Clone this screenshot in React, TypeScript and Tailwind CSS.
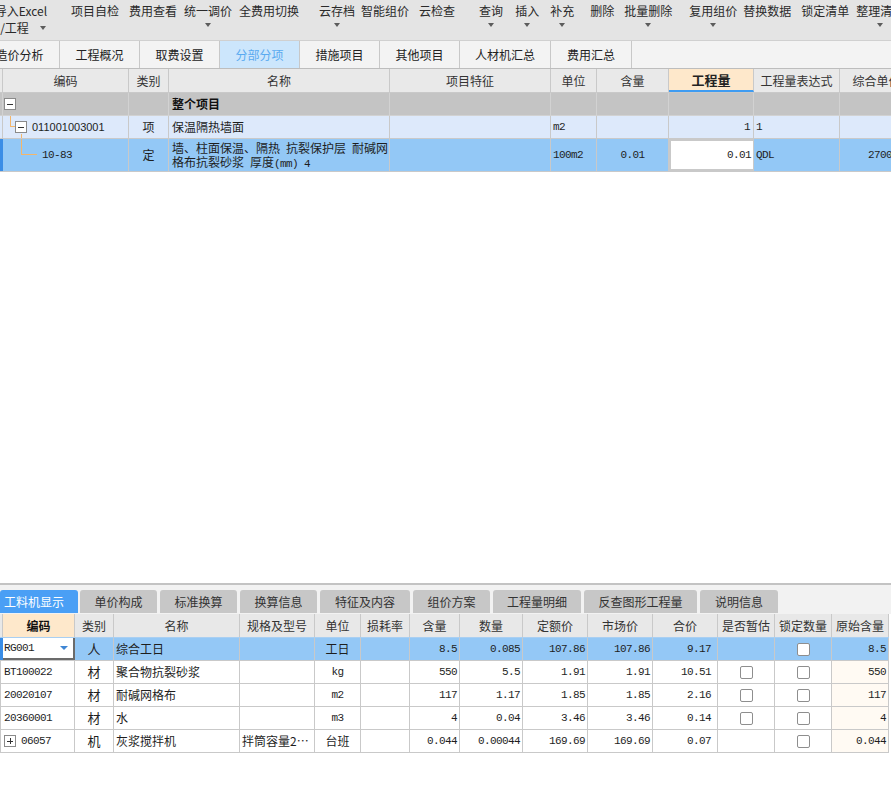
import React from 'react';

const mono = "font-['Liberation_Mono','Noto_Sans_CJK_SC',monospace] text-[11px] tracking-[-0.6px]";
const cell = 'border-r border-[#c9c9c9] flex items-center overflow-hidden whitespace-nowrap';

const Caret = ({ className = '' }: { className?: string }) => (
  <span className={`block w-0 h-0 border-x-[3.5px] border-x-transparent border-t-[4px] border-t-[#5c5c5c] ${className}`} />
);

const Gap = () => <span className="inline-block w-[6px]" />;

const tools = [
  { t: '项目自检', c: 'ml-[24px]' },
  { t: '费用查看', c: 'ml-[10px]' },
  { t: '统一调价', c: 'ml-[7px]', a: true },
  { t: '全费用切换', c: 'ml-[7px]' },
  { t: '云存档', c: 'ml-[20px]', a: true },
  { t: '智能组价', c: 'ml-[6px]' },
  { t: '云检查', c: 'ml-[10px]' },
  { t: '查询', c: 'ml-[24px]', a: true },
  { t: '插入', c: 'ml-[12px]', a: true },
  { t: '补充', c: 'ml-[11px]', a: true },
  { t: '删除', c: 'ml-[16px]' },
  { t: '批量删除', c: 'ml-[10px]', a: true },
  { t: '复用组价', c: 'ml-[17px]', a: true },
  { t: '替换数据', c: 'ml-[6px]' },
  { t: '锁定清单', c: 'ml-[10px]' },
  { t: '整理清单', c: 'ml-[7px]', a: true },
];

const topTabs = [
  { t: '造价分析', c: 'ml-[-20px] w-[80px]' },
  { t: '工程概况', c: 'w-[80px]' },
  { t: '取费设置', c: 'w-[80px]' },
  { t: '分部分项', c: 'w-[80px]', active: true },
  { t: '措施项目', c: 'w-[80px]' },
  { t: '其他项目', c: 'w-[80px]' },
  { t: '人材机汇总', c: 'w-[91px]' },
  { t: '费用汇总', c: 'w-[81px]' },
];

const bottomTabs = [
  { t: '工料机显示', c: 'w-[78px] justify-start pl-[4px] bg-[#4a9ff5] text-white', first: true },
  { t: '单价构成', c: 'w-[77px] ml-[-1px]' },
  { t: '标准换算', c: 'w-[77px]' },
  { t: '换算信息', c: 'w-[77px]' },
  { t: '特征及内容', c: 'w-[90px]' },
  { t: '组价方案', c: 'w-[77px]' },
  { t: '工程量明细', c: 'w-[88px]' },
  { t: '反查图形工程量', c: 'w-[113px]' },
  { t: '说明信息', c: 'w-[78px]' },
];

const TOP = 'grid grid-cols-[3px_126px_40px_221px_161px_46px_72px_85px_86px_74px] w-[914px]';
const LOW = 'grid grid-cols-[3px_72px_39px_126px_75px_46px_49px_50px_63px_65px_65px_65px_57px_57px_57px] w-[889px]';

const topHead = ['编码', '类别', '名称', '项目特征', '单位', '含量', '工程量', '工程量表达式', '综合单价'];
const lowHead = ['编码', '类别', '名称', '规格及型号', '单位', '损耗率', '含量', '数量', '定额价', '市场价', '合价', '是否暂估', '锁定数量', '原始含量'];

type Item = {
  code: string; cat: string; name: string; spec?: string; unit: string; cjkUnit?: boolean;
  qty: string; num: string; quota: string; market: string; total: string; est: boolean; orig: string; plus?: boolean;
};

const items: Item[] = [
  { code: 'RG001', cat: '人', name: '综合工日', unit: '工日', cjkUnit: true, qty: '8.5', num: '0.085', quota: '107.86', market: '107.86', total: '9.17', est: false, orig: '8.5' },
  { code: 'BT100022', cat: '材', name: '聚合物抗裂砂浆', unit: 'kg', qty: '550', num: '5.5', quota: '1.91', market: '1.91', total: '10.51', est: true, orig: '550' },
  { code: '20020107', cat: '材', name: '耐碱网格布', unit: 'm2', qty: '117', num: '1.17', quota: '1.85', market: '1.85', total: '2.16', est: true, orig: '117' },
  { code: '20360001', cat: '材', name: '水', unit: 'm3', qty: '4', num: '0.04', quota: '3.46', market: '3.46', total: '0.14', est: true, orig: '4' },
  { code: '06057', cat: '机', name: '灰浆搅拌机', spec: '拌筒容量2…', unit: '台班', cjkUnit: true, qty: '0.044', num: '0.00044', quota: '169.69', market: '169.69', total: '0.07', est: false, orig: '0.044', plus: true },
];

const TreeBox = ({ sign }: { sign: '-' | '+' }) => (
  <span className="relative block w-[12px] h-[12px] shrink-0 border border-[#8a8a8a] bg-white">
    <span className="absolute left-[2px] top-[4.5px] w-[6px] h-[1px] bg-[#333]" />
    {sign === '+' && <span className="absolute left-[4.5px] top-[2px] w-[1px] h-[6px] bg-[#333]" />}
  </span>
);

const Check = () => <span className="block w-[13px] h-[13px] border border-[#8e8e8e] rounded-[2px] bg-white" />;

export default function App() {
  return (
    <div className="w-[891px] h-[791px] overflow-hidden flex flex-col bg-white text-[12px] text-[#1e1e1e] font-['Noto_Sans_CJK_SC',sans-serif] leading-[14px]">
      {/* toolbar */}
      <div className="h-[41px] shrink-0 flex bg-[#e4e4e4] border-b border-[#d0d0d0] text-[#2a2a2a] overflow-hidden">
        <div className="ml-[-5px] w-[52px] shrink-0 flex flex-col items-center pt-[4px]">
          <span className="whitespace-nowrap">导入Excel</span>
          <span className="flex items-center mt-[3px] ml-[4px] whitespace-nowrap">
            /工程<Caret className="ml-[11px]" />
          </span>
        </div>
        {tools.map((x) => (
          <div key={x.t} className={`shrink-0 flex flex-col items-center pt-[4px] ${x.c}`}>
            <span className="whitespace-nowrap">{x.t}</span>
            {x.a && <Caret className="mt-[5px]" />}
          </div>
        ))}
      </div>

      {/* page tabs */}
      <div className="h-[28px] shrink-0 flex bg-[#f3f3f3] border-b border-[#bdbdbd] overflow-hidden">
        {topTabs.map((x) => (
          <div
            key={x.t}
            className={`shrink-0 flex items-center justify-center border-r border-[#c8c8c8] whitespace-nowrap ${x.c} ${x.active ? 'bg-[#cce6fc] text-[#5aaaf0]' : 'text-[#222]'}`}
          >
            {x.t}
          </div>
        ))}
      </div>

      {/* top grid */}
      <div className="shrink-0 overflow-hidden">
        <div className={`${TOP} h-[24px] bg-[#e9e9e9] border-b border-[#c9c9c9] text-[#333]`}>
          <div className="border-r border-[#c9c9c9]" />
          {topHead.map((h) => (
            <div
              key={h}
              className={`${cell} justify-center ${h === '工程量' ? 'bg-[#fee8cb] font-bold text-[13px] border-b-2 border-b-[#3f9cf2] text-[#222]' : ''}`}
            >
              {h}
            </div>
          ))}
        </div>

        <div className={`${TOP} h-[23px] bg-[#c4c4c4] border-b border-[#d2d2d2]`}>
          <div className="border-r border-[#d2d2d2]" />
          <div className="border-r border-[#d2d2d2] flex items-center pl-[1px]">
            <TreeBox sign="-" />
          </div>
          <div className="border-r border-[#d2d2d2]" />
          <div className="border-r border-[#d2d2d2] flex items-center pl-[3px] font-bold text-[#111]">整个项目</div>
          <div className="border-r border-[#d2d2d2]" />
          <div className="border-r border-[#d2d2d2]" />
          <div className="border-r border-[#d2d2d2]" />
          <div className="border-r border-[#d2d2d2]" />
          <div className="border-r border-[#d2d2d2]" />
          <div className="border-r border-[#d2d2d2]" />
        </div>

        <div className={`${TOP} h-[23px] bg-[#dde9fb] border-b border-[#c9c9c9]`}>
          <div className="border-r border-[#c9c9c9]" />
          <div className={`${cell} relative pl-[12px]`}>
            <span className="absolute left-[7px] top-0 w-[1px] h-[11px] bg-[#f4b66a]" />
            <span className="absolute left-[7px] top-[10px] w-[5px] h-[1px] bg-[#f4b66a]" />
            <span className="absolute left-[18px] top-[18px] w-[1px] h-[5px] bg-[#f4b66a]" />
            <TreeBox sign="-" />
            <span className="ml-[5px] font-['Liberation_Sans',sans-serif] text-[11px]">011001003001</span>
          </div>
          <div className={`${cell} justify-center`}>项</div>
          <div className={`${cell} pl-[3px]`}>保温隔热墙面</div>
          <div className={cell} />
          <div className={`${cell} pl-[2px] ${mono}`}>m2</div>
          <div className={cell} />
          <div className={`${cell} justify-end pr-[3px] ${mono}`}>1</div>
          <div className={`${cell} pl-[2px] ${mono}`}>1</div>
          <div className={cell} />
        </div>

        <div className={`${TOP} h-[33px] bg-[#93c8f6] border-b border-[#c9c9c9]`}>
          <div className="bg-[#3a8de6]" />
          <div className={`${cell} relative pl-[39px] ${mono}`}>
            <span className="absolute left-[18px] top-0 w-[1px] h-[16px] bg-[#f4b66a]" />
            <span className="absolute left-[18px] top-[15px] w-[16px] h-[1px] bg-[#f4b66a]" />
            10-83
          </div>
          <div className={`${cell} justify-center`}>定</div>
          <div className="border-r border-[#c9c9c9] pl-[3px] pt-[2px] leading-[14px] whitespace-nowrap overflow-hidden">
            <div>
              墙、柱面保温、隔热<Gap />抗裂保护层<Gap />耐碱网
            </div>
            <div>
              格布抗裂砂浆<Gap />厚度<span className={mono}>(mm) 4</span>
            </div>
          </div>
          <div className={cell} />
          <div className={`${cell} pl-[2px] ${mono}`}>100m2</div>
          <div className={`${cell} justify-center ${mono}`}>0.01</div>
          <div className={`${cell} justify-end pr-[2px] bg-white border-2 border-[#3d96ef] ${mono}`}>0.01</div>
          <div className={`${cell} pl-[2px] ${mono}`}>QDL</div>
          <div className={`${cell} justify-end pr-[3px] ${mono}`}>2700.00</div>
        </div>
      </div>

      <div className="flex-1" />

      {/* bottom panel */}
      <div className="h-[2px] shrink-0 bg-[#c3c3c3]" />
      <div className="h-[29px] shrink-0 flex items-end bg-[#f2f2f2] pb-[1px] gap-x-[3px]">
        {bottomTabs.map((x) => (
          <div
            key={x.t}
            className={`h-[23px] shrink-0 flex items-center rounded-t-[3px] whitespace-nowrap ${x.first ? '' : 'justify-center bg-[#c7c7c7] text-[#333]'} ${x.c}`}
          >
            {x.t}
          </div>
        ))}
      </div>

      <div className="shrink-0">
        <div className={`${LOW} h-[24px] bg-[#e8e8e8] border-b border-[#a9cff2] text-[#333]`}>
          <div className="border-r border-[#c9c9c9]" />
          {lowHead.map((h) => (
            <div key={h} className={`${cell} justify-center ${h === '编码' ? 'bg-[#fee8cb] font-bold text-[#111]' : ''}`}>
              {h}
            </div>
          ))}
        </div>

        {items.map((r, i) => {
          const sel = i === 0;
          return (
            <div key={r.code} className={`${LOW} h-[23px] border-b border-[#c9c9c9] ${sel ? 'bg-[#94c8f6]' : 'bg-white'}`}>
              <div className={sel ? 'bg-[#3a8de6]' : 'border-l border-[#c9c9c9]'} />
              {sel ? (
                <div className={`flex items-center justify-between bg-white border-r-2 border-b-2 border-[#6b6b6b] pl-[1px] pr-[5px] ${mono}`}>
                  RG001
                  <span className="block w-0 h-0 border-x-[4px] border-x-transparent border-t-[4px] border-t-[#3f86d4]" />
                </div>
              ) : (
                <div className={`${cell} pl-[1px] ${mono}`}>
                  {r.plus && <TreeBox sign="+" />}
                  <span className={r.plus ? 'ml-[5px]' : ''}>{r.code}</span>
                </div>
              )}
              <div className={`${cell} justify-center text-[13px]`}>{r.cat}</div>
              <div className={`${cell} pl-[2px]`}>{r.name}</div>
              <div className={`${cell} pl-[2px]`}>{r.spec ?? ''}</div>
              <div className={`${cell} justify-center ${r.cjkUnit ? '' : mono}`}>{r.unit}</div>
              <div className={cell} />
              <div className={`${cell} justify-end pr-[2px] ${mono}`}>{r.qty}</div>
              <div className={`${cell} justify-end pr-[2px] ${mono}`}>{r.num}</div>
              <div className={`${cell} justify-end pr-[2px] ${mono}`}>{r.quota}</div>
              <div className={`${cell} justify-end pr-[2px] ${mono}`}>{r.market}</div>
              <div className={`${cell} justify-end pr-[6px] ${mono}`}>{r.total}</div>
              <div className={`${cell} justify-center`}>{r.est && <Check />}</div>
              <div className={`${cell} justify-center`}>
                <Check />
              </div>
              <div className={`${cell} justify-end pr-[2px] ${mono} ${sel ? '' : 'bg-[#fffaf3]'}`}>{r.orig}</div>
            </div>
          );
        })}
      </div>
      <div className="h-[38px] shrink-0" />
    </div>
  );
}
